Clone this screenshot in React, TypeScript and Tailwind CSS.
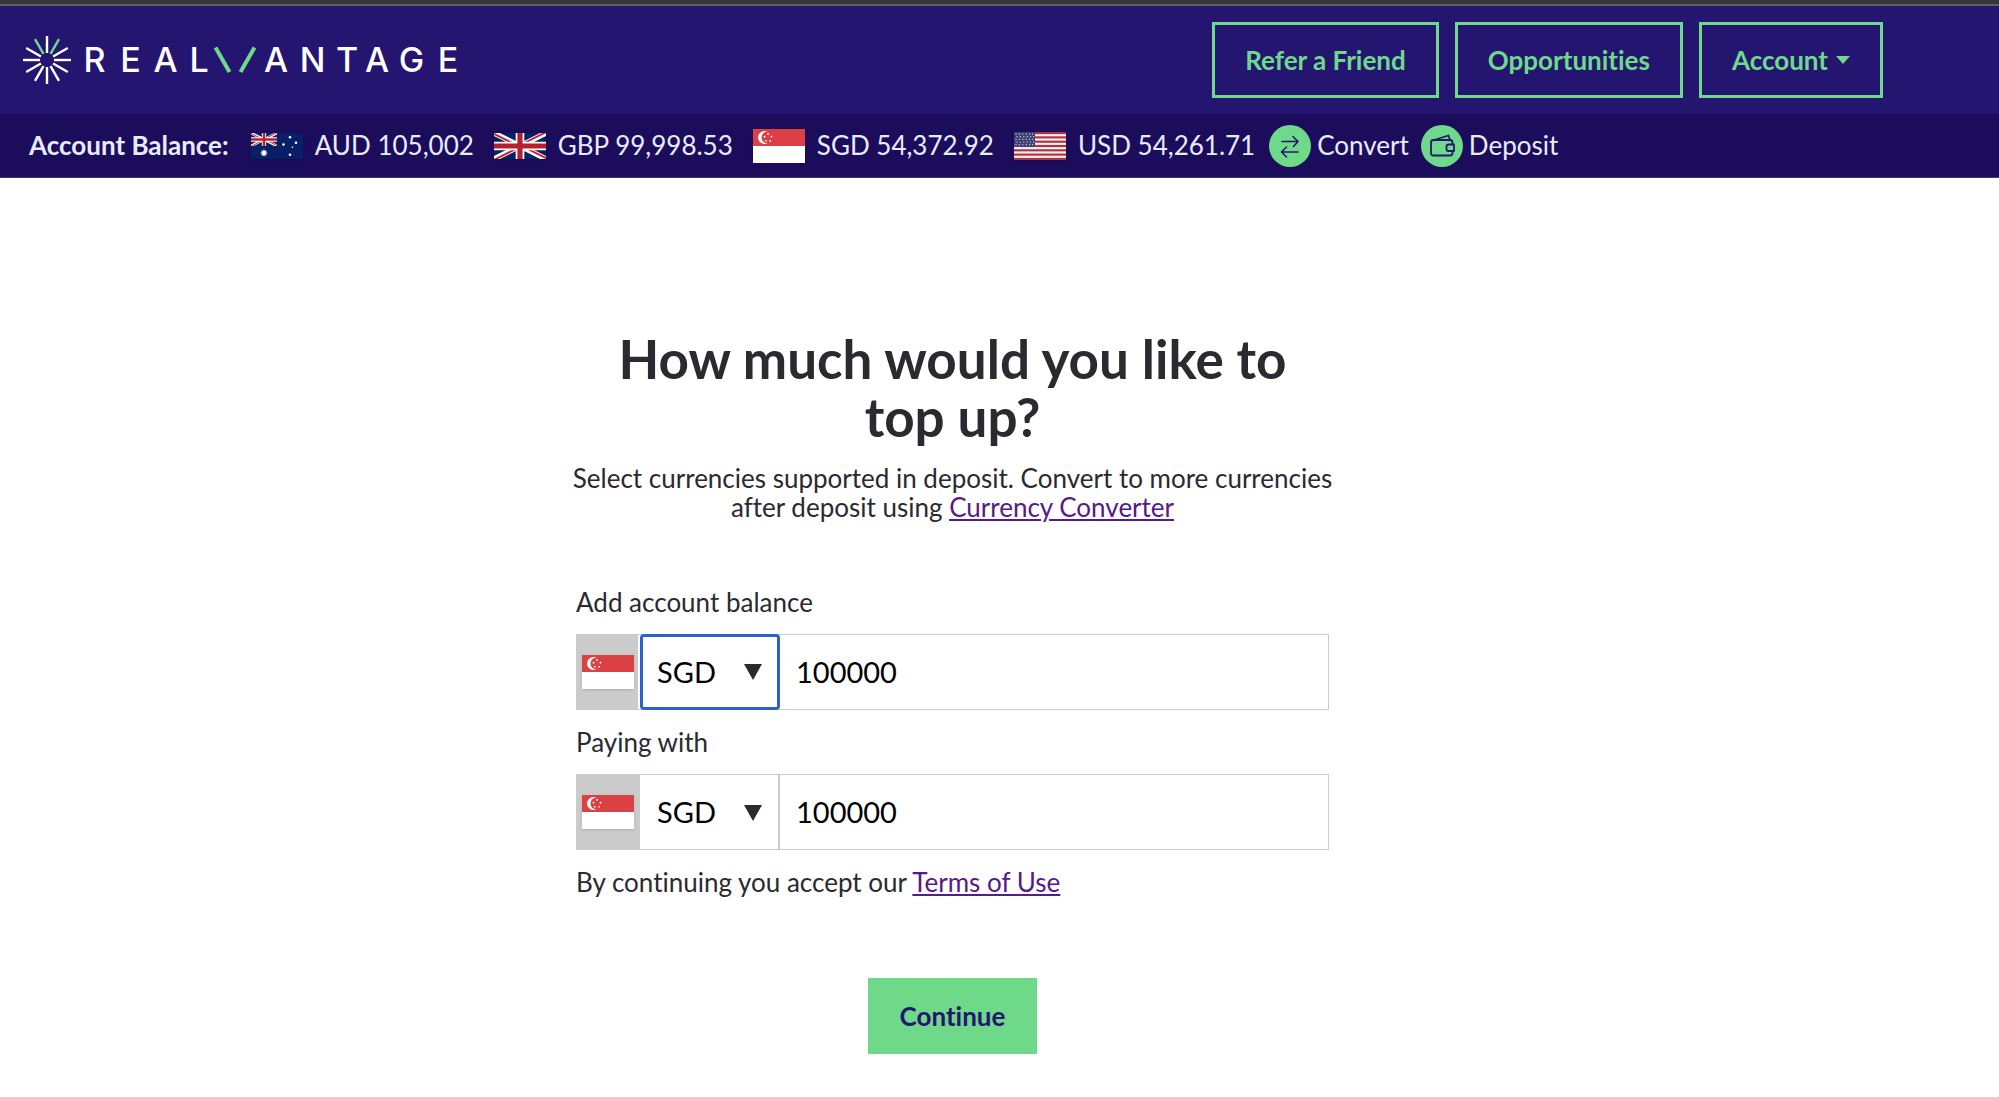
import { useState } from 'react'

const CURRENCIES = ['SGD', 'AUD', 'GBP', 'USD']

const BALANCES = [
  { code: 'AUD', amount: '105,002' },
  { code: 'GBP', amount: '99,998.53' },
  { code: 'SGD', amount: '54,372.92' },
  { code: 'USD', amount: '54,261.71' },
]

const RAYS = [0, 30, 60, 90, 120, 150, 180, 210, 240, 270, 300, 330]

function Logo() {
  return (
    <svg viewBox="0 0 440 50" className="h-[50px] w-[440px]" role="img" aria-label="RealVantage">
      {RAYS.map(deg => (
        <line
          key={deg}
          x1="25"
          y1="1"
          x2="25"
          y2="18"
          strokeWidth="2.4"
          stroke={deg === 30 || deg === 330 ? '#6fd98a' : '#fff'}
          transform={`rotate(${deg} 25 25)`}
        />
      ))}
      <g fill="#fff" fontFamily="Inter, sans-serif" fontSize="34" fontWeight="500" textAnchor="middle">
        <text x="72.5 108.5 143.5 177" y="37">REAL</text>
        <text x="254 290.5 325 355 389.5 426" y="37">ANTAGE</text>
      </g>
      <path d="M193.500 12.500L207.500 37M232.500 12.500L218.500 37" stroke="#6fd98a" strokeWidth="4" />
    </svg>
  )
}

function UnionJack() {
  return (
    <>
      <rect width="60" height="30" fill="#012169" />
      <path d="M0 0L60 30M60 0L0 30" stroke="#fff" strokeWidth="6" />
      <path d="M0 1L28 15M32 15L60 29M60 -1L32 13M28 17L0 31" stroke="#c8202f" strokeWidth="2.2" />
      <path d="M30 0V30M0 15H60" stroke="#fff" strokeWidth="10" />
      <path d="M30 0V30M0 15H60" stroke="#b7202f" strokeWidth="6" />
    </>
  )
}

function Flag({ code }: { code: string }) {
  if (code === 'SGD') {
    return (
      <svg viewBox="0 0 52 34" className="h-[34px] w-[52px] shrink-0 shadow" aria-hidden="true">
        <rect width="52" height="34" fill="#fff" />
        <rect width="52" height="17" fill="#db4045" />
        <circle cx="11.500" cy="8.500" r="6.500" fill="#fff" />
        <circle cx="14.500" cy="8.500" r="6" fill="#db4045" />
        <g fill="#fff">
          <circle cx="15" cy="5" r="0.900" />
          <circle cx="11.500" cy="7.700" r="0.900" />
          <circle cx="18.500" cy="7.700" r="0.900" />
          <circle cx="12.800" cy="11.800" r="0.900" />
          <circle cx="17.200" cy="11.800" r="0.900" />
        </g>
      </svg>
    )
  }
  if (code === 'USD') {
    return (
      <svg viewBox="0 0 52 28" preserveAspectRatio="none" className="h-[28px] w-[52px] shrink-0 shadow" aria-hidden="true">
        <rect width="52" height="28" fill="#f4f4f6" />
        {[0, 1, 2, 3, 4, 5, 6].map(i => (
          <rect key={i} y={i * 4.31} width="52" height="2.15" fill="#b0323f" />
        ))}
        <rect width="21" height="15" fill="#3e3f73" />
        {[2, 4.7, 7.4, 10.1, 12.8].map((y, row) =>
          [2, 5.4, 8.8, 12.2, 15.6, 18.6].map(x => (
            <circle key={`${x}-${y}`} cx={x + (row % 2 ? 1 : 0)} cy={y} r="0.700" fill="#c9cadb" />
          ))
        )}
      </svg>
    )
  }
  if (code === 'GBP') {
    return (
      <svg viewBox="0 0 60 30" preserveAspectRatio="none" className="h-[26px] w-[52px] shrink-0 shadow" aria-hidden="true">
        <UnionJack />
      </svg>
    )
  }
  return (
    <svg viewBox="0 0 52 26" className="h-[26px] w-[52px] shrink-0 shadow" aria-hidden="true">
      <rect width="52" height="26" fill="#071f66" />
      <svg width="26" height="13" viewBox="0 0 60 30">
        <UnionJack />
      </svg>
      <path
        d="M13 16l.8 2 2-.8-.9 2 2 .9-2 .7.8 2-2-.8-.7 2-.8-2-2 .8.8-2-2-.7 2-.9-.8-2 2 .8z"
        fill="#fff"
      />
      <g fill="#fff">
        <circle cx="39" cy="4.300" r="1.300" />
        <circle cx="32.500" cy="11.500" r="1.300" />
        <circle cx="45" cy="9.700" r="1.300" />
        <circle cx="41.500" cy="14.200" r="0.800" />
        <circle cx="39" cy="21.800" r="1.300" />
      </g>
    </svg>
  )
}

function NavButton({ children }: { children: React.ReactNode }) {
  return (
    <button
      type="button"
      className="flex h-[76px] items-center gap-2 border-3 border-[#6fd98a] px-[30px] font-bold text-[#6fd98a]"
    >
      {children}
    </button>
  )
}

function ConvertIcon() {
  return (
    <svg viewBox="0 0 42 42" className="size-[42px]" aria-hidden="true">
      <circle cx="21" cy="21" r="21" fill="#6fd98a" />
      <g fill="none" stroke="#241571" strokeWidth="1.600" strokeLinecap="round" strokeLinejoin="round">
        <path d="M13 16.500H29L24 11.500M29 16.500L24.500 21.500" />
        <path d="M29 27H12.500L17.500 22M12.500 27L17.500 32" />
      </g>
    </svg>
  )
}

function WalletIcon() {
  return (
    <svg viewBox="0 0 42 42" className="size-[42px]" aria-hidden="true">
      <circle cx="21" cy="21" r="21" fill="#6fd98a" />
      <g fill="none" stroke="#241571" strokeWidth="1.800" strokeLinejoin="round">
        <rect x="10" y="15" width="21.500" height="15.500" rx="2.500" />
        <path d="M13 15L27.500 10.500L29 15" />
        <path d="M33 19.500H27.500a2 2 0 0 0-2 2V24a2 2 0 0 0 2 2H33z" fill="#6fd98a" />
      </g>
    </svg>
  )
}

function AmountField({
  id,
  label,
  active,
  onActivate,
}: {
  id: string
  label: string
  active: boolean
  onActivate: () => void
}) {
  const [currency, setCurrency] = useState('SGD')
  const [amount, setAmount] = useState('100000')

  return (
    <div>
      <label htmlFor={id} className="block leading-8">{label}</label>
      <div className="my-4 flex h-[76px] border border-[#cbcbcb] text-[29px] text-black">
        <div className={`-my-px -ml-px flex items-center bg-[#cbcbcb] pl-1.5 ${active ? 'mr-0.5 w-[62px]' : 'w-16'}`}>
          <Flag code={currency} />
        </div>
        <div className={`relative -my-px w-[140px] ${active ? '' : 'border-y border-r-2 border-[#cbcbcb]'}`}>
          <select
            aria-label={`${label} currency`}
            value={currency}
            onFocus={onActivate}
            onChange={e => setCurrency(e.target.value)}
            className={`size-full appearance-none bg-white outline-none ${active ? 'rounded border-[3px] border-[#2a62c9] pl-3.5' : 'pl-[17px]'}`}
          >
            {CURRENCIES.map(c => (
              <option key={c} value={c}>{c}</option>
            ))}
          </select>
          <svg
            viewBox="0 0 18 16"
            className="pointer-events-none absolute top-[30px] left-[104px] h-4 w-[18px] fill-[#2b2a30]"
            aria-hidden="true"
          >
            <path d="M0 0H18L9 16z" />
          </svg>
        </div>
        <input
          id={id}
          value={amount}
          onChange={e => setAmount(e.target.value)}
          className="min-w-0 flex-1 px-4 outline-none"
        />
      </div>
    </div>
  )
}

export default function App() {
  const [activeField, setActiveField] = useState('balance')

  return (
    <div className="min-h-screen bg-white font-['Lato',sans-serif] text-[26px] text-[#2b2a30] [font-variant-ligatures:no-common-ligatures]">
      <div className="h-1.5 border-b-2 border-[#5f6064] bg-[#35363a]" />
      <header>
        <div className="flex h-[108px] items-center justify-between bg-[#241571] pr-[116px] pl-[22px]">
          <a href="#home"><Logo /></a>
          <nav className="flex gap-4">
            <NavButton>Refer a Friend</NavButton>
            <NavButton>Opportunities</NavButton>
            <NavButton>
              Account
              <svg viewBox="0 0 14 8" className="h-2 w-3.5 fill-current" aria-hidden="true">
                <path d="M0 0H14L7 8z" />
              </svg>
            </NavButton>
          </nav>
        </div>
        <div className="flex h-16 items-center border-b border-[#3d2f7c] bg-[#1c0c5c] pl-[29px] whitespace-nowrap text-[#e8ecff]">
          <span className="mr-[22px] font-bold">Account Balance:</span>
          {BALANCES.map(b => (
            <div key={b.code} className="mr-5 flex items-center gap-3">
              <Flag code={b.code} />
              <span>{b.code} {b.amount}</span>
            </div>
          ))}
          <a href="#convert" className="-ml-1.5 mr-3 flex items-center gap-1.5">
            <ConvertIcon />
            Convert
          </a>
          <a href="#deposit" className="flex items-center gap-1.5">
            <WalletIcon />
            Deposit
          </a>
        </div>
      </header>

      <main className="pt-[152px] pr-[94px]">
        <form className="mx-auto max-w-[753px]" onSubmit={e => e.preventDefault()}>
          <h1 className="px-8 text-center text-[53px] leading-[58px] font-bold">How much would you like to top up?</h1>
          <p className="-mx-3 mt-[18px] mb-16 text-center leading-[29px]">
            Select currencies supported in deposit. Convert to more currencies after deposit using{' '}
            <a href="#converter" className="text-[#551a8b] underline">Currency Converter</a>
          </p>
          <AmountField
            id="balance"
            label="Add account balance"
            active={activeField === 'balance'}
            onActivate={() => setActiveField('balance')}
          />
          <AmountField
            id="pay"
            label="Paying with"
            active={activeField === 'pay'}
            onActivate={() => setActiveField('pay')}
          />
          <p className="leading-8">
            By continuing you accept our <a href="#terms" className="text-[#551a8b] underline">Terms of Use</a>
          </p>
          <button
            type="submit"
            className="mx-auto mt-20 block h-[76px] bg-[#6fd98a] px-8 font-bold text-[#241571]"
          >
            Continue
          </button>
        </form>
      </main>
    </div>
  )
}
